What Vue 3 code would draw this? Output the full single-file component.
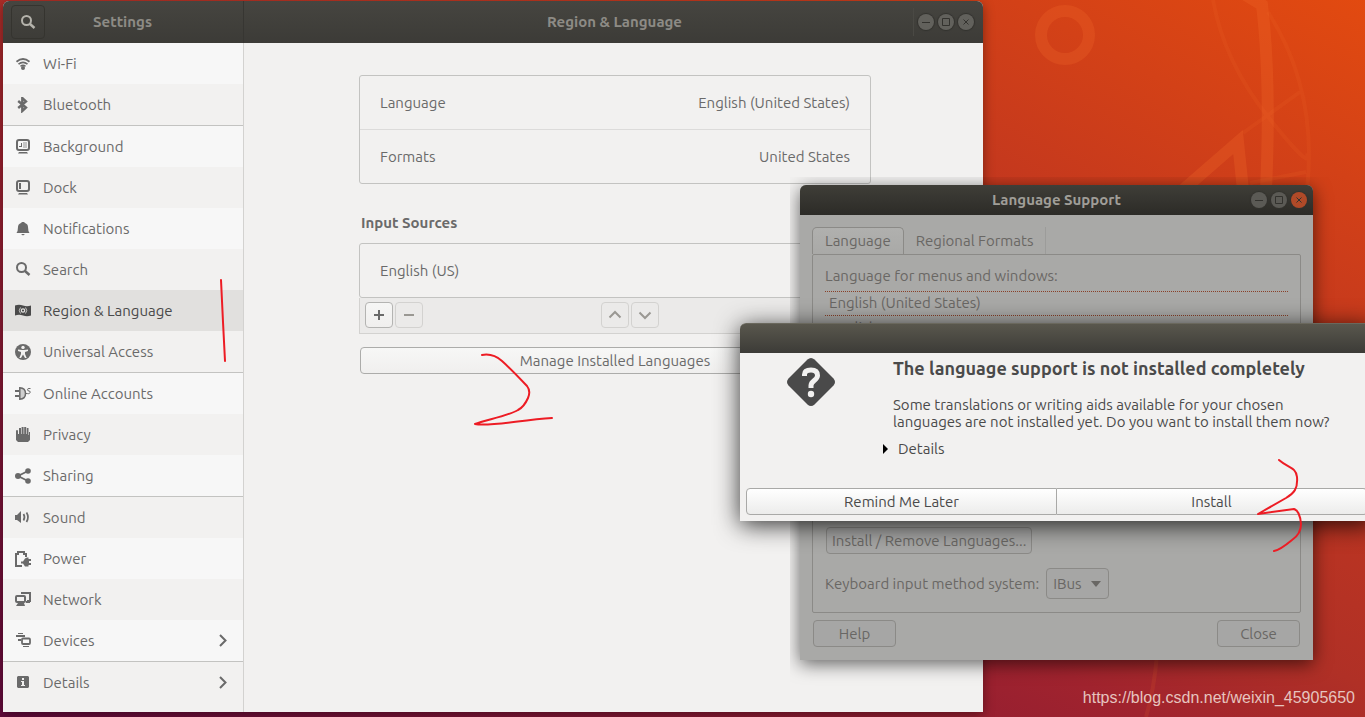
<script setup>
const groups = [
  [
    { label: 'Wi-Fi', icon: '<path d="M1.500 5.700Q8 .4 14.500 5.700" fill="none" stroke="currentColor" stroke-width="1.800"/><path d="M3.500 8.200Q8 4.500 12.500 8.200M5.500 10.300Q8 8.300 10.500 10.300" fill="none" stroke="currentColor" stroke-width="1.600"/><circle cx="8" cy="12" r="2"/>' },
    { label: 'Bluetooth', icon: '<path d="M3.200 4 11 10.500 7.300 14V1L11 4.500 3.200 11" fill="none" stroke="currentColor" stroke-width="2.400"/>' }
  ],
  [
    { label: 'Background', icon: '<rect x="2" y="1" width="12" height="10" rx="2" fill="none" stroke="currentColor" stroke-width="2"/><path d="M8 3h4v6H8z" opacity=".35"/><path d="M4 7h2V4h1v4H4zM4 13h8l1 1.500H3z"/>' },
    { label: 'Dock', icon: '<rect x="2" y="1" width="12" height="10" rx="2" fill="none" stroke="currentColor" stroke-width="2"/><path d="M4 3h2v6H4zM4 13h8l1 1.500H3z"/>' },
    { label: 'Notifications', icon: '<path d="M7 1h2l1 1q3 1 3 4 0 4 1.500 6h-13Q3 10 3 6q0-3 3-4zM6 13h4l-2 1.500z"/>' },
    { label: 'Search', icon: '<circle cx="6.500" cy="5.500" r="4.500" fill="none" stroke="currentColor" stroke-width="2"/><path d="m10 9 4.500 4" stroke="currentColor" stroke-width="2.400"/>' },
    { label: 'Region & Language', active: true, icon: '<path d="M0 2.500q4-1.500 8 0t8 0v10q-4 1.500-8 0t-8 0z"/><g fill="none" stroke="#e4e3e1"><circle cx="8" cy="7.500" r="1.700" stroke-width="1.200"/><path d="M5.500 4.500Q3 7.500 5.500 10.500M10.500 4.500Q13 7.500 10.500 10.500" stroke-width=".8"/></g>' },
    { label: 'Universal Access', icon: '<circle cx="8" cy="8" r="8"/><g fill="#f2f1f0"><circle cx="8" cy="3.400" r="1.700"/><path d="M3 5.500 7 6h2l4-.5v1.600L10 8v2l1.700 4H10l-2-3.500L6 14H4.300L6 10V8L3 7.100z"/></g>' }
  ],
  [
    { label: 'Online Accounts', icon: '<path d="M0 5h4M0 10h4" stroke="currentColor" stroke-width="2"/><path d="M4.800 1.800Q10.500 2 10.500 7.500T4.800 13.200z" fill="#cfcfcf" stroke="currentColor" stroke-width="1.500"/><path d="M10.500 7.500h2M15.500 2.500h-1.500q-1.500 0-1.500 1.200T14 5t1.200 1.300T13.500 7.700h-1" fill="none" stroke="currentColor"/>' },
    { label: 'Privacy', icon: '<path d="M1 4q0-1 1-1t1 1v3h1V1h2v6h.6V0h2v7h.6V0h2v7h.6V1h1.700v7h.5V5H15v8l-2 2H3l-2-2z"/>' },
    { label: 'Sharing', icon: '<circle cx="3" cy="8" r="3"/><circle cx="13" cy="3" r="2.800"/><circle cx="13" cy="13" r="2.800"/><path d="m13 3-10 5 10 5" fill="none" stroke="currentColor" stroke-width="1.800"/>' }
  ],
  [
    { label: 'Sound', icon: '<path d="M0 5h2l4-4v12L2 10H0z"/><path d="M8.500 4q2 3.200 0 6.500M11.500 2.500q3 4.800 0 9.500" fill="none" stroke="currentColor" stroke-width="1.700"/>' },
    { label: 'Power', icon: '<path d="M7 15H1V3h2V1h6v2h2v3" fill="none" stroke="currentColor" stroke-width="2"/><path d="M12 6.500h1.500V8H16v2h-2v2h2v2h-2.500v1.500H10l-2-3H6v-2h2l2-3z"/>' },
    { label: 'Network', icon: '<path d="M6 1h9v8h-3M11 10h4" fill="none" stroke="currentColor" stroke-width="2"/><rect x="1" y="4" width="9" height="6" rx="1" fill="#f2f1f0" stroke="currentColor" stroke-width="2"/><path d="M3 11h6l1 3H1z"/>' },
    { label: 'Devices', more: true, icon: '<path d="M1 2h9v2H1zM3 0h5v1H3zM3 6h3v2H3z"/><rect x="7" y="5.500" width="8" height="5.500" rx="1" fill="none" stroke="currentColor" stroke-width="1.800"/><path d="M8 13h6v1H8z"/>' }
  ],
  [
    { label: 'Details', more: true, icon: '<path d="M3 1h10l1 1v10l-1 1H3l-1-1V2z"/><path d="M7 3h2v2H7zM6 6h3v4h1v1H6v-1h1V7H6z" fill="#f2f1f0"/>' }
  ]
]
const formats = [
  { label: 'Language', value: 'English (United States)' },
  { label: 'Formats', value: 'United States' }
]
const controls = [
  { name: 'Minimize', path: 'M4 8.500h8' },
  { name: 'Maximize', path: 'M4.500 4.500h7v7h-7z' },
  { name: 'Close', path: 'm5.500 5.500 5 5m0-5-5 5' }
]
</script>

<template>
  <main class="desktop">
    <svg class="wallpaper" width="1365" height="717" viewBox="0 0 1365 717" fill="none" stroke="#f26a2a" aria-hidden="true">
      <circle cx="1065" cy="35" r="24" stroke-width="12" opacity=".25" />
      <g stroke-width="4" opacity=".14">
        <path d="M1213 0Q1224 62 1269 118T1307 153M1268 12Q1318 90 1307 190M1300 92 1243 133M1250 183 1306 172" />
        <path d="M1157 655Q1154 690 1146 717" />
      </g>
      <g stroke-width="12" opacity=".28">
        <path d="M1244-6 1262 5Q1271 80 1266 190" />
        <path d="M1184 189 1238 142 1243 190" />
      </g>
    </svg>

    <section class="settings" aria-label="Settings">
      <header class="settings-bar">
        <div class="bar-left">
          <button class="search" aria-label="Search settings">
            <svg width="16" height="16" viewBox="0 0 16 16" fill="none" stroke="currentColor"><circle cx="6.500" cy="6.500" r="4.500" stroke-width="2" /><path d="m10 10 4.500 4" stroke-width="2.400" /></svg>
          </button>
          <span class="bar-title">Settings</span>
        </div>
        <h1 class="bar-title page-title">Region &amp; Language</h1>
        <div class="controls">
          <button v-for="c in controls" :key="c.name" :aria-label="c.name" class="control">
            <svg width="16" height="16" viewBox="0 0 16 16"><path :d="c.path" /></svg>
          </button>
        </div>
      </header>
      <div class="settings-body">
        <nav class="sidebar">
          <ul v-for="(group, i) in groups" :key="i" class="group">
            <li v-for="item in group" :key="item.label">
              <a href="#" class="nav-item" :class="{ active: item.active }">
                <svg width="16" height="16" viewBox="0 0 16 16" fill="currentColor" v-html="item.icon" />
                <span>{{ item.label }}</span>
                <svg v-if="item.more" class="chevron" width="10" height="14" viewBox="0 0 10 14"><path d="m2 1 5.500 5.500L2 12" fill="none" stroke="currentColor" stroke-width="2" /></svg>
              </a>
            </li>
          </ul>
        </nav>
        <div class="page">
          <div class="column">
            <div class="listbox">
              <button v-for="f in formats" :key="f.label" class="row"><span>{{ f.label }}</span><span>{{ f.value }}</span></button>
            </div>
            <h2 class="heading">Input Sources</h2>
            <div class="listbox"><button class="row"><span>English (US)</span></button></div>
            <div class="toolbar">
              <div class="pair">
                <button class="tool" aria-label="Add"><svg width="16" height="16" viewBox="0 0 16 16"><path d="M3 8h10M8 3v10" /></svg></button>
                <button class="tool" disabled aria-label="Remove"><svg width="16" height="16" viewBox="0 0 16 16"><path d="M3 8h10" /></svg></button>
              </div>
              <div class="pair">
                <button class="tool" disabled aria-label="Move up"><svg width="16" height="16" viewBox="0 0 16 16"><path d="m2.500 10.500 5.500-5.500 5.500 5.500" /></svg></button>
                <button class="tool" disabled aria-label="Move down"><svg width="16" height="16" viewBox="0 0 16 16"><path d="m2.500 5.500 5.500 5.500 5.500-5.500" /></svg></button>
              </div>
            </div>
            <button class="manage">Manage Installed Languages</button>
          </div>
        </div>
      </div>
    </section>

    <section class="support" aria-label="Language Support">
      <header class="support-bar">
        <h2 class="support-title">Language Support</h2>
        <div class="controls">
          <button v-for="c in controls" :key="c.name" :aria-label="c.name" class="control" :class="{ hot: c.name === 'Close' }">
            <svg width="16" height="16" viewBox="0 0 16 16"><path :d="c.path" /></svg>
          </button>
        </div>
      </header>
      <div class="support-body">
        <div class="tabs" role="tablist">
          <button role="tab" aria-selected="true" class="tab current">Language</button>
          <button role="tab" aria-selected="false" class="tab">Regional Formats</button>
        </div>
        <div class="frame" role="tabpanel">
          <p class="label">Language for menus and windows:</p>
          <ul class="languages">
            <li class="chosen">English (United States)</li>
            <li>English</li>
          </ul>
          <button class="dim install-remove">Install / Remove Languages...</button>
          <div class="input-method">
            <label for="method">Keyboard input method system:</label>
            <span class="select-wrap">
              <select id="method" class="dim"><option>IBus</option></select>
              <svg class="caret" width="10" height="6" viewBox="0 0 10 6"><path d="M0 0h10L5 6z" fill="currentColor" /></svg>
            </span>
          </div>
        </div>
        <div class="support-actions">
          <button class="dim">Help</button>
          <button class="dim">Close</button>
        </div>
      </div>
    </section>

    <section class="dialog" role="dialog" aria-labelledby="dialog-title">
      <header class="dialog-bar"></header>
      <div class="message">
        <svg class="question" width="48" height="48" viewBox="0 0 48 48"><path d="M20.500 1.500q3.500-3 7 0l19 19q3 3.500 0 7l-19 19q-3.500 3-7 0l-19-19q-3-3.500 0-7z" fill="#4a4a4a" /><path d="M17.500 18v-1.500Q17.500 12 24 12t6.500 5.500c0 5-6.500 5-6.500 10V30" fill="none" stroke="#f2f1f0" stroke-width="5" /><circle cx="24" cy="36" r="3.200" fill="#f2f1f0" /></svg>
        <div class="copy">
          <h2 id="dialog-title" class="dialog-title">The language support is not installed completely</h2>
          <p class="text">Some translations or writing aids available for your chosen<br>languages are not installed yet. Do you want to install them now?</p>
          <details class="details"><summary><svg width="5" height="10" viewBox="0 0 5 10"><path d="M0 0 5 5 0 10z" /></svg>Details</summary></details>
        </div>
      </div>
      <div class="choices">
        <button>Remind Me Later</button>
        <button>Install</button>
      </div>
    </section>

    <svg class="marks" width="1365" height="717" viewBox="0 0 1365 717" fill="none" stroke="#ed1c24" stroke-width="2" stroke-linecap="round" stroke-linejoin="round" aria-hidden="true">
      <path d="M221 280 223 322 225 361" />
      <path d="M482 355Q493 353 502 361T527 386Q531 391 528 398 524 407 518 410C508 416 485 420 475 424 489 427 520 420 552 418" />
      <path d="M1279 460C1288 468 1296 467 1297 477 1298 489 1294 493 1286 498L1258 514 1294 509Q1300 511 1301 524 1301 534 1292 540 1280 550 1274 551" />
    </svg>
    <a class="credit" href="#">https://blog.csdn.net/weixin_45905650</a>
  </main>
</template>

<style>
body { margin: 0; }
</style>

<style scoped>
.desktop {
  position: relative;
  min-height: 717px;
  height: 100vh;
  overflow: hidden;
  background: linear-gradient(to top right, #640a3c 0%, #a0232e 42%, #b03026 52%, #c4381e 74%, #e24a10 100%);
  font-family: Ubuntu, "Noto Sans", sans-serif;
  font-size: 15px;
  line-height: 20px;
  color: #6a6a6a;
}
.desktop * { box-sizing: border-box; }
button, select { margin: 0; padding: 0; border: 0; background: none; font: inherit; color: inherit; }
h1, h2, p, ul { margin: 0; padding: 0; }
ul { list-style: none; }
svg { display: block; flex: none; }
.wallpaper, .marks { position: absolute; top: 0; left: 0; pointer-events: none; }

.settings {
  position: absolute;
  top: 1px;
  right: 382px;
  bottom: 5px;
  left: 3px;
  display: flex;
  flex-direction: column;
  background: #f2f1f0;
  border-radius: 6px 6px 0 0;
  box-shadow: 0 3px 12px rgba(0, 0, 0, .4);
}
.settings-bar {
  flex: none;
  display: flex;
  align-items: center;
  height: 42px;
  background: linear-gradient(#464540, #3c3b37);
  border-radius: 6px 6px 0 0;
  color: #8d8b85;
}
.bar-left {
  display: flex;
  align-items: center;
  width: 241px;
  height: 42px;
  border-right: 1px solid #373632;
}
.search {
  display: grid;
  place-items: center;
  width: 34px;
  height: 34px;
  margin-left: 8px;
  border: 1px solid #35342f;
  border-radius: 4px;
  color: #b5b3ac;
}
.bar-title { font-size: 15px; font-weight: 700; text-align: center; }
.bar-left .bar-title { flex: 1; padding-right: 43px; }
.page-title { flex: 1; padding-left: 72px; }
.controls { display: flex; gap: 4px; }
.settings-bar .controls { padding: 6px 9px 6px 4px; border-left: 1px solid #4a4944; }
.control {
  display: block;
  width: 16px;
  height: 16px;
  border-radius: 50%;
  background: #62615c;
  box-shadow: 0 0 1px 1px #33322e;
}
.control path { fill: none; stroke: #33322e; stroke-width: 1; }
.settings-body { flex: 1; display: flex; min-height: 0; }
.sidebar { flex: none; width: 241px; border-right: 1px solid #d3d2d0; }
.group + .group { border-top: 1px solid #c3c3c1; }
.nav-item {
  display: flex;
  align-items: center;
  gap: 12px;
  height: 41px;
  padding: 0 15px 0 12px;
  color: #6a6a6a;
  text-decoration: none;
}
.group li:nth-child(odd) { background: #f7f7f7; }
.group:nth-child(4) li:nth-child(odd), .group:nth-child(5) li { background: #f2f1f0; }
.group:nth-child(4) li:nth-child(even) { background: #f7f7f7; }
.nav-item.active { background: #e1e0de; color: #4a4a4a; }
.chevron { margin-left: auto; }

.page { flex: 1; padding: 32px 16px 0 19px; }
.column { max-width: 512px; margin: 0 auto; }
.listbox { border: 1px solid #c3c3c1; border-radius: 3px; }
.row {
  display: flex;
  align-items: center;
  justify-content: space-between;
  width: 100%;
  height: 53px;
  padding: 0 20px;
}
.row + .row { height: 54px; border-top: 1px solid #dcdbda; }
.heading { margin: 29px 2px 10px; font-size: 15px; font-weight: 700; }
.toolbar {
  display: grid;
  grid-template-columns: 236px auto;
  padding: 4px 5px 5px;
  background: #ebeae9;
  border: 1px solid #d3d2d0;
  border-top: 0;
}
.pair { display: flex; gap: 2px; }
.tool {
  display: grid;
  place-items: center;
  width: 28px;
  height: 26px;
  border: 1px solid #b4b4b2;
  border-radius: 4px;
  background: linear-gradient(#f6f6f5, #f0efee);
}
.tool path { fill: none; stroke: currentColor; stroke-width: 2; }
.tool:disabled { border-color: #d3d2d0; background: none; color: #9a9893; }
.manage {
  display: block;
  width: calc(100% - 2px);
  height: 27px;
  margin: 13px 1px 0;
  border: 1px solid #acacaa;
  border-radius: 4px;
  background: linear-gradient(#f7f7f6, #f0efee);
}

.support {
  position: absolute;
  top: 185px;
  right: 52px;
  left: 800px;
  background: #a9a9a7;
  border-radius: 6px 6px 0 0;
  box-shadow: 0 4px 18px rgba(0, 0, 0, .6);
  clip-path: inset(-8px -24px -30px -10px);
  color: #696764;
}
.support-bar {
  display: flex;
  align-items: center;
  height: 30px;
  padding: 0 6px 0 62px;
  background: linear-gradient(#3f3e38, #2c2b27);
  border-radius: 6px 6px 0 0;
}
.support-title { flex: 1; color: #a09e98; font-size: 15px; text-align: center; }
.support-bar .control { background: #5b5a55; }
.support-bar .control.hot { background: #b04a28; }
.support-body { padding: 12px 12px 13px; }
.tabs { display: flex; height: 27px; }
.tab { height: 27px; padding: 0 12px; border-right: 1px solid #9c9c9a; }
.tab.current {
  border: 1px solid #8b8a87;
  border-bottom: 0;
  border-radius: 5px 5px 0 0;
  background: linear-gradient(#b0b0ae, #a9a9a7);
}
.frame { height: 359px; padding: 11px 12px 0; border: 1px solid #8b8a87; border-radius: 2px; }
.languages { height: 236px; margin-top: 5px; }
.languages li { height: 24px; padding: 2px 4px; }
.languages .chosen {
  height: 25px;
  padding-top: 1px;
  border-top: 1px dotted #8a4028;
  border-bottom: 1px dotted #8a4028;
}
.dim { height: 27px; border: 1px solid #8b8a87; border-radius: 4px; background: #a6a6a5; }
.install-remove { display: block; margin-left: 1px; padding: 0 5px; }
.input-method { display: flex; align-items: center; gap: 7px; margin-top: 14px; }
.select-wrap { position: relative; }
.select-wrap select { display: block; width: 63px; height: 31px; padding: 0 6px; appearance: none; }
.caret { position: absolute; top: 13px; right: 8px; pointer-events: none; }
.support-actions { display: flex; justify-content: space-between; padding: 7px 1px 0; }
.support-actions .dim { width: 83px; }

.dialog {
  position: absolute;
  top: 323px;
  right: -8px;
  left: 740px;
  background: #f2f1f0;
  border-radius: 6px 6px 0 0;
  box-shadow: 0 4px 24px rgba(0, 0, 0, .8);
  color: #4a4a4a;
}
.dialog-bar {
  height: 30px;
  border-top: 1px solid #6a685d;
  border-radius: 6px 6px 0 0;
  background: linear-gradient(#59574d, #3c3b37);
}
.message { display: flex; gap: 58px; padding: 5px 12px 0 47px; }
.copy { flex: 1; white-space: nowrap; }
.dialog-title { font-size: 18px; line-height: 20px; font-weight: 700; }
.text { margin-top: 18px; line-height: 17px; }
.details { margin: 9px 0 0 -10px; }
.details summary { display: flex; align-items: center; gap: 10px; list-style: none; }
.choices { display: flex; margin-top: 29px; padding: 0 6px 6px; }
.choices button {
  flex: 1;
  height: 27px;
  border: 1px solid #a9a9a7;
  background: linear-gradient(#fff, #ececeb);
}
.choices button:first-child { border-radius: 4px 0 0 4px; }
.choices button:last-child { border-left: 0; border-radius: 0 4px 4px 0; }
.credit {
  position: absolute;
  right: 10px;
  bottom: 9px;
  color: #e6c4bf;
  font-family: "Liberation Sans", Arial, sans-serif;
  font-size: 16px;
  line-height: 20px;
  text-decoration: none;
}
</style>
